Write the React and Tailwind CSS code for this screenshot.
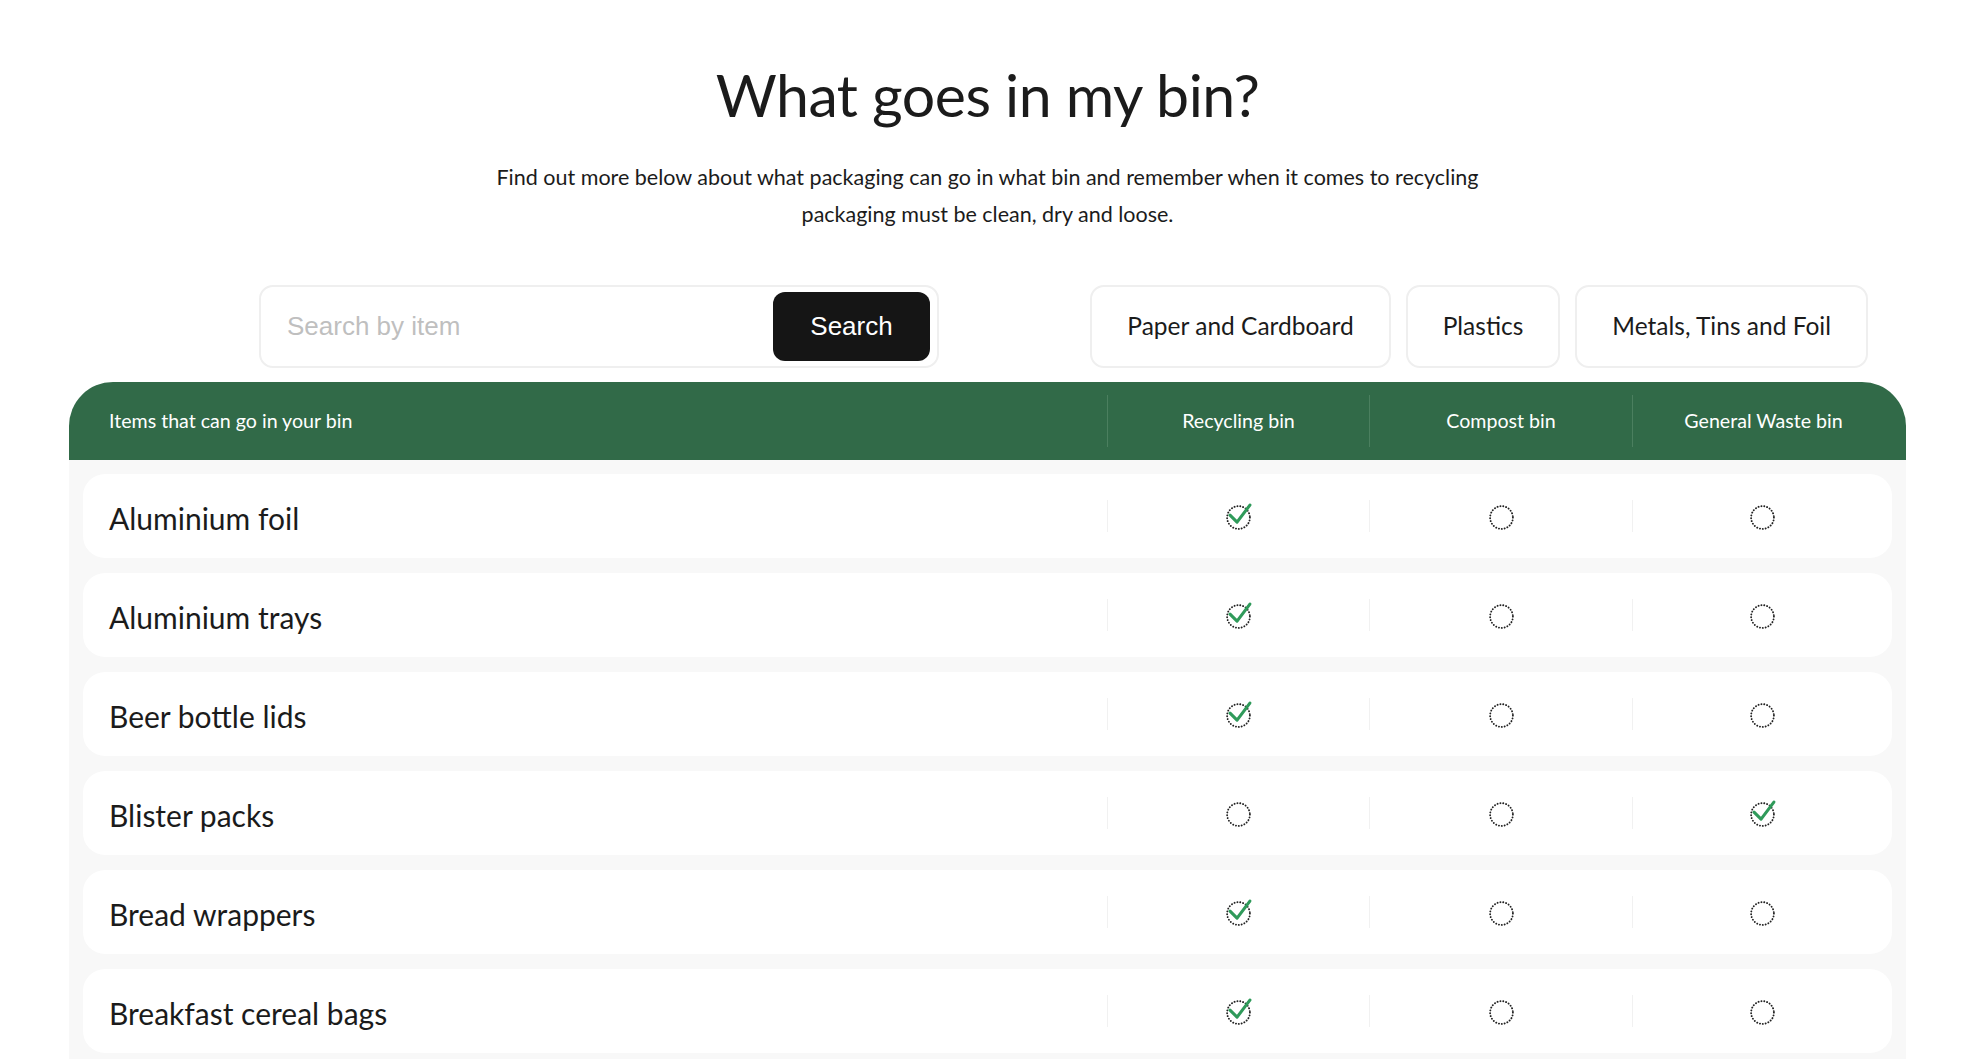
import { useState } from "react";

const ITEMS = [
  { name: "Aluminium foil", bins: [true, false, false] },
  { name: "Aluminium trays", bins: [true, false, false] },
  { name: "Beer bottle lids", bins: [true, false, false] },
  { name: "Blister packs", bins: [false, false, true] },
  { name: "Bread wrappers", bins: [true, false, false] },
  { name: "Breakfast cereal bags", bins: [true, false, false] },
];

const CATEGORIES = ["Paper and Cardboard", "Plastics", "Metals, Tins and Foil"];

function BinMark({ checked }) {
  return (
    <svg width="29" height="29" viewBox="-2 -3 28 28" fill="none">
      <circle cx="12" cy="12" r="11" stroke="#222" strokeWidth="1.8" strokeDasharray="0.1 2.7" strokeLinecap="round" />
      {checked && (
        <path d="M3.8 9.6 L10.6 16.4 L23 0" stroke="#2f9a5a" strokeWidth="3" strokeLinecap="round" strokeLinejoin="round" />
      )}
    </svg>
  );
}

export default function App() {
  const [query, setQuery] = useState("");

  return (
    <main className="min-h-screen bg-white text-[#1b1b1b]" style={{ fontFamily: "Lato, 'Noto Sans', sans-serif" }}>
      <div className="ml-[69px] w-[1837px] pt-[59px]">
        {/* Heading */}
        <h1 className="text-center text-[59px] leading-[72px] font-normal tracking-[-0.5px]">What goes in my bin?</h1>
        <p className="mx-auto mt-[28px] w-[1030px] text-center text-[21.5px] leading-[37px]">
          Find out more below about what packaging can go in what bin and remember when it comes to recycling packaging must be clean, dry and loose.
        </p>

        {/* Search + category filters */}
        <div className="mt-[52px] flex items-center justify-between pl-[190px] pr-[38px]">
          <div className="flex h-[83px] w-[680px] items-center rounded-[14px] border-2 border-[#efefef] pl-[26px] pr-[7px]" style={{ fontFamily: "'Liberation Sans', Arial, sans-serif" }}>
            <input
              value={query}
              onChange={(e) => setQuery(e.target.value)}
              placeholder="Search by item"
              className="min-w-0 flex-1 bg-transparent text-[26px] outline-none placeholder:text-[#bfbfbf]"
            />
            <button type="button" className="h-[69px] w-[157px] rounded-[12px] bg-[#151515] text-[26px] text-white">
              Search
            </button>
          </div>
          <div className="flex gap-[15px]">
            {CATEGORIES.map((c) => (
              <button
                key={c}
                type="button"
                className="h-[83px] rounded-[14px] border-2 border-[#efefef] bg-white px-[35px] text-[24.5px] text-[#1b1b1b]"
              >
                {c}
              </button>
            ))}
          </div>
        </div>

        {/* Table */}
        <section className="mt-[14px] overflow-hidden rounded-t-[44px] bg-[#f8f8f8]">
          <div className="grid h-[78px] grid-cols-[1038px_262px_263px_262px] items-center bg-[#316a48] text-[19.6px] text-white">
            <div className="pl-[40px]">Items that can go in your bin</div>
            <div className="flex h-[52px] items-center justify-center border-l border-[#4b7f5f]">Recycling bin</div>
            <div className="flex h-[52px] items-center justify-center border-l border-[#4b7f5f]">Compost bin</div>
            <div className="flex h-[52px] items-center justify-center border-l border-[#4b7f5f]">General Waste bin</div>
          </div>

          <div className="flex flex-col gap-[15px] px-[14px] pt-[14px] pb-[14px]">
            {ITEMS.map((item) => (
              <div key={item.name} className="grid h-[84px] grid-cols-[1024px_262px_263px_1fr] items-center rounded-[22px] bg-white">
                <div className="pl-[26px] pt-[4px] text-[30px] leading-none">{item.name}</div>
                {item.bins.map((b, i) => (
                  <div key={i} className="flex h-[32px] items-center justify-center border-l border-[#f1f1f1]">
                    <BinMark checked={b} />
                  </div>
                ))}
              </div>
            ))}
          </div>
        </section>
      </div>
    </main>
  );
}
